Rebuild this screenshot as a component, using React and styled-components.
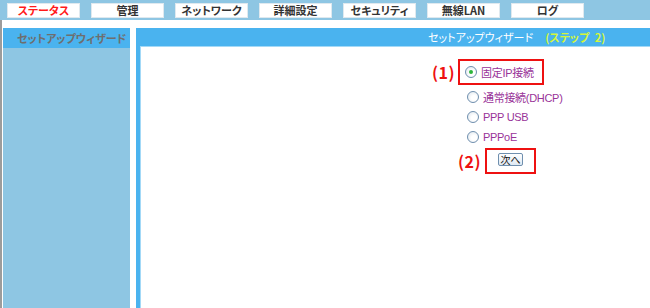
import React from 'react';
import styled, { createGlobalStyle } from 'styled-components';

const GlobalStyle = createGlobalStyle`
  html, body {
    margin: 0;
    padding: 0;
    background: #ffffff;
  }
  body {
    font-family: "Noto Sans CJK JP", "Liberation Sans", sans-serif;
    font-feature-settings: "palt";
  }
`;

const Page = styled.div`
  display: flex;
  flex-direction: column;
  height: 308px;
  overflow: hidden;
`;

const TopBar = styled.nav`
  height: 20px;
  background: #8ec6e3;
  display: flex;
  align-items: flex-start;
  gap: 11px;
  padding: 3px 0 0 7px;
  box-sizing: border-box;
`;

const Tab = styled.div`
  width: 73px;
  height: 15px;
  box-sizing: border-box;
  background: #ffffff;
  border: 1px solid #dfe9ef;
  display: flex;
  align-items: center;
  justify-content: center;
  font-size: 11px;
  font-weight: bold;
  color: ${(p) => (p.$active ? '#ff1a1a' : '#333333')};
  line-height: 1;
`;

const Body = styled.div`
  flex: 1;
  display: flex;
  border-left: 2px solid #9c9c9c;
  padding: 8px 0 0 1px;
  gap: 6px;
`;

const Sidebar = styled.aside`
  width: 127px;
  background: #8ec6e3;
  display: flex;
  flex-direction: column;
`;

const SideHeader = styled.div`
  height: 20px;
  background: #4ab3ef;
  display: flex;
  align-items: center;
  padding-left: 14px;
  font-size: 11px;
  font-weight: bold;
  color: #6e6e6e;
`;

const Main = styled.section`
  flex: 1;
  background: #4ab3ef;
  padding-left: 4px;
  display: flex;
  flex-direction: column;
`;

const MainHeader = styled.div`
  height: 18px;
  display: flex;
  align-items: center;
  padding-left: 288px;
  font-size: 11px;
  color: #ffffff;
  white-space: nowrap;
`;

const Step = styled.span`
  margin-left: 12px;
  color: #d4f53c;
  font-weight: bold;
  word-spacing: 3px;
`;

const Content = styled.div`
  flex: 1;
  background: #ffffff;
  border-top: 1px solid #a3d9f7;
  border-left: 1px solid #a3d9f7;
  display: flex;
  flex-direction: column;
  padding-top: 12px;
`;

const StepRow = styled.div`
  display: flex;
  align-items: center;
  margin-left: ${(p) => p.$indent}px;
  margin-top: ${(p) => p.$top || 0}px;
`;

const StepLabel = styled.span`
  font-size: 16px;
  font-weight: bold;
  color: #ee1111;
  margin-right: ${(p) => p.$gap}px;
  letter-spacing: 0.5px;
`;

const RedBox = styled.div`
  box-sizing: border-box;
  height: ${(p) => p.$h}px;
  width: ${(p) => p.$w}px;
  border: 2px solid #ee1111;
  display: flex;
  align-items: center;
  justify-content: ${(p) => (p.$center ? 'center' : 'flex-start')};
  padding-left: ${(p) => (p.$center ? 0 : 5)}px;
  padding-bottom: ${(p) => (p.$center ? 3 : 0)}px;
`;

const Option = styled.label`
  display: flex;
  align-items: center;
  gap: 4px;
  height: 20px;
  margin-left: ${(p) => p.$indent || 0}px;
  font-family: "Liberation Sans", "Noto Sans CJK JP", sans-serif;
  font-size: 11px;
  color: #993399;
  letter-spacing: -0.3px;
`;

const Radio = styled.span`
  width: 12px;
  height: 12px;
  box-sizing: border-box;
  border-radius: 50%;
  border: 1px solid #6f8fae;
  background: radial-gradient(circle at 60% 60%, #ffffff 30%, #dbe3ea 100%);
  display: flex;
  align-items: center;
  justify-content: center;

  &::after {
    content: '';
    width: 4px;
    height: 4px;
    border-radius: 50%;
    background: ${(p) => (p.$checked ? '#2db53a' : 'transparent')};
  }
`;

const NextButton = styled.button`
  width: 25px;
  height: 13px;
  padding: 0;
  box-sizing: border-box;
  border: 1px solid #6f8fae;
  border-radius: 2px;
  background: linear-gradient(#ffffff, #dfe9f3);
  font-family: "Noto Sans CJK JP", sans-serif;
  font-size: 10px;
  line-height: 10px;
  color: #111111;
`;

const tabs = ['ステータス', '管理', 'ネットワーク', '詳細設定', 'セキュリティ', '無線LAN', 'ログ'];
const options = ['通常接続(DHCP)', 'PPP USB', 'PPPoE'];

export default function App() {
  return (
    <Page>
      <GlobalStyle />
      <TopBar>
        {tabs.map((t, i) => (
          <Tab key={t} $active={i === 0}>{t}</Tab>
        ))}
      </TopBar>
      <Body>
        <Sidebar>
          <SideHeader>セットアップウィザード</SideHeader>
        </Sidebar>
        <Main>
          <MainHeader>
            セットアップウィザード
            <Step>(ステップ 2)</Step>
          </MainHeader>
          <Content>
            <StepRow $indent={291}>
              <StepLabel $gap={3}>(1)</StepLabel>
              <RedBox $w={86} $h={26}>
                <Option>
                  <Radio $checked />
                  固定IP接続
                </Option>
              </RedBox>
            </StepRow>
            <div style={{ height: 2 }} />
            {options.map((o) => (
              <Option key={o} $indent={326}>
                <Radio />
                {o}
              </Option>
            ))}
            <StepRow $indent={317} $top={1}>
              <StepLabel $gap={4}>(2)</StepLabel>
              <RedBox $w={51} $h={26} $center>
                <NextButton>次へ</NextButton>
              </RedBox>
            </StepRow>
          </Content>
        </Main>
      </Body>
    </Page>
  );
}
